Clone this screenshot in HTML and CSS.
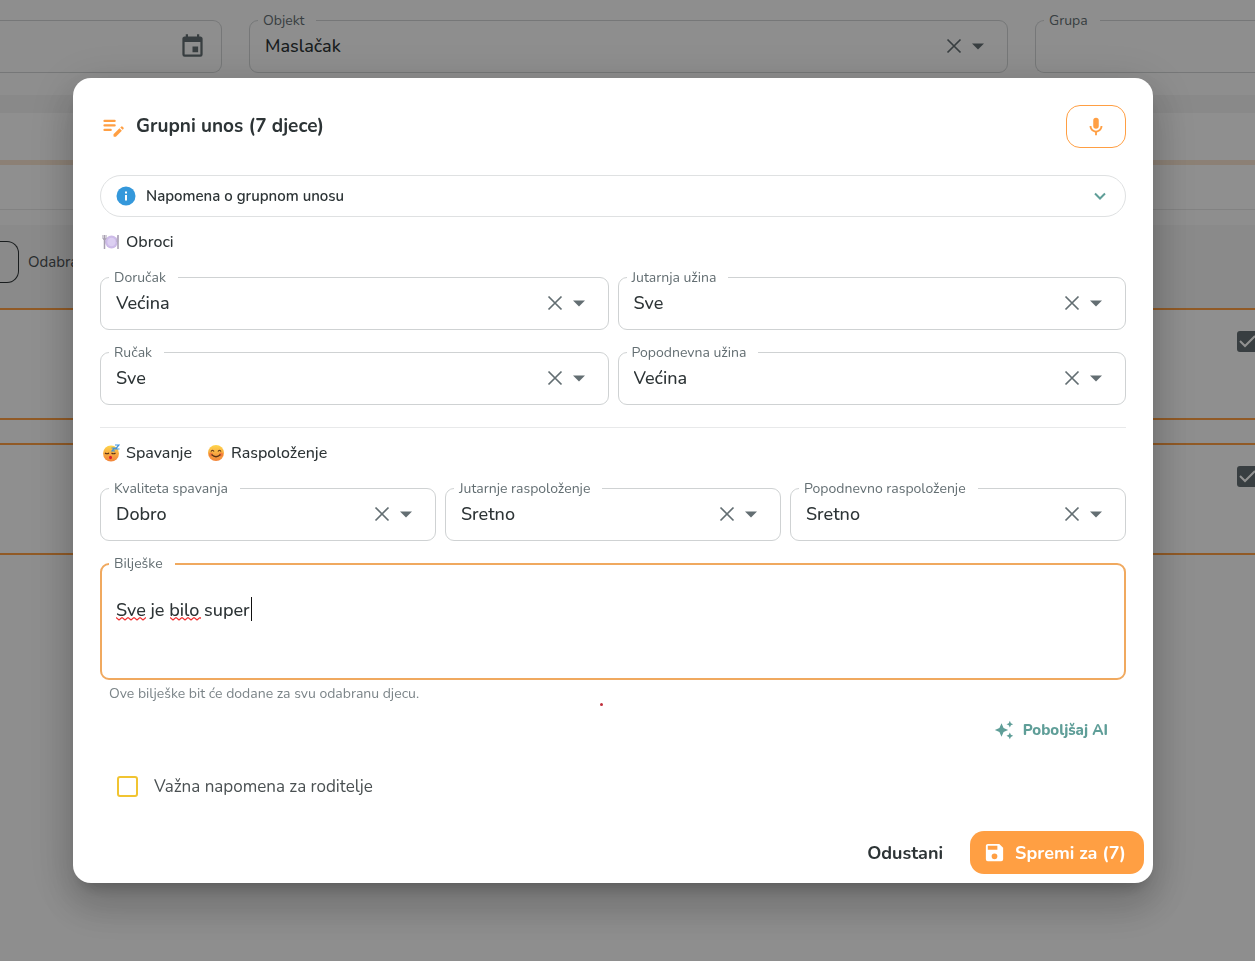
FILE: index.html
```html
<!DOCTYPE html>
<html lang="hr">
<head>
  <meta charset="UTF-8">
  <meta name="viewport" content="width=device-width, initial-scale=1">
  <title>Grupni unos</title>
  <link rel="stylesheet" href="styles.css">
</head>
<body>
  <svg class="sprite" aria-hidden="true">
    <symbol id="i-close" viewBox="0 0 24 24"><path d="M5.5 5.5l13 13M18.500 5.500l-13 13" fill="none" stroke="currentColor" stroke-width="1.700"/></symbol>
    <symbol id="i-down" viewBox="0 0 24 24"><path d="M6 9.500h12l-6 6z" fill="currentColor"/></symbol>
  </svg>

  <div class="page">
    <div class="filters">
      <div class="date-box">
        <button class="icon-btn" aria-label="Datum">
          <svg width="27" height="27" viewBox="0 0 24 24"><path fill="currentColor" d="M19,19H5V8H19M16,1V3H8V1H6V3H5C3.89,3 3,3.89 3,5V19A2,2 0 0,0 5,21H19A2,2 0 0,0 21,19V5C21,3.89 20.1,3 19,3H18V1M17,12H12V17H17V12Z"/></svg>
        </button>
      </div>
      <fieldset class="field">
        <legend><label for="objekt">Objekt</label></legend>
        <div class="field-row">
          <select id="objekt"><option>Maslačak</option></select>
          <button class="icon-btn" aria-label="Očisti"><svg><use href="#i-close"/></svg></button>
          <svg><use href="#i-down"/></svg>
        </div>
      </fieldset>
      <fieldset class="field field-cut">
        <legend><label for="grupa">Grupa</label></legend>
        <div class="field-row">
          <select id="grupa"><option></option></select>
        </div>
      </fieldset>
    </div>
    <div class="tabs"></div>
    <div class="subbar"></div>
    <div class="toolbar">
      <button class="select-btn" aria-label="Odaberi"></button>
      <span>Odabrano</span>
    </div>
    <div class="child-card"><input type="checkbox" aria-label="Dijete 1" checked></div>
    <div class="child-card"><input type="checkbox" aria-label="Dijete 2" checked></div>
  </div>

  <div class="overlay">
    <div class="dialog" role="dialog" aria-labelledby="dialogTitle">
      <div class="dialog-header">
        <svg class="note-icon" width="27" height="27" viewBox="0 0 24 24"><g fill="none" stroke="currentColor" stroke-width="2" stroke-linecap="round"><path d="M4 7h9M4 11h9M4 15h5.500"/></g><path fill="currentColor" d="M18.010 12.870l.71-.71a1 1 0 0 1 1.410 0l.71.71c.39.39.39 1.020 0 1.410l-.71.71zM17.300 13.580l-5.300 5.300v1.620q0 .5.500.5h1.620l5.300-5.300z"/></svg>
        <h2 id="dialogTitle">Grupni unos (7 djece)</h2>
        <button class="mic-btn" aria-label="Diktiraj">
          <svg width="22" height="22" viewBox="0 0 24 24"><path fill="currentColor" d="M12,2A3,3 0 0,1 15,5V11A3,3 0 0,1 12,14A3,3 0 0,1 9,11V5A3,3 0 0,1 12,2M19,11C19,14.53 16.39,17.44 13,17.93V21H11V17.93C7.61,17.44 5,14.53 5,11H7A5,5 0 0,0 12,16A5,5 0 0,0 17,11H19Z"/></svg>
        </button>
      </div>

      <button class="notice">
        <svg width="20" height="20" viewBox="0 0 20 20"><circle cx="10" cy="10" r="9.500" fill="#3498db"/><path d="M9 9h2v5.500H9zM9 5.500h2v2H9z" fill="#fff"/></svg>
        <span>Napomena o grupnom unosu</span>
        <svg class="chevron" width="20" height="20" viewBox="0 0 20 20"><path d="M5 7.500l5 5 5-5" fill="none" stroke="currentColor" stroke-width="2"/></svg>
      </button>

      <div class="section-title">
        <svg width="18" height="18" viewBox="0 0 18 18">
          <circle cx="9.500" cy="9" r="6.500" fill="#cdbbe8"/><circle cx="9.500" cy="9" r="4.200" fill="#dccff2"/>
          <path d="M1 2v4M2.500 2v4M4 2v4" stroke="#a79fb0"/><path d="M1 6h3M2.500 6v10M16 2v14" stroke="#a79fb0" stroke-width="1.500" fill="none"/>
          <path d="M16.500 2q-2 1-2 7h2z" fill="#b3a9bf"/>
        </svg>
        <span>Obroci</span>
      </div>

      <div class="grid two">
        <fieldset class="field">
          <legend><label for="dorucak">Doručak</label></legend>
          <div class="field-row">
            <select id="dorucak"><option>Većina</option></select>
            <button class="icon-btn" aria-label="Očisti"><svg><use href="#i-close"/></svg></button>
            <svg><use href="#i-down"/></svg>
          </div>
        </fieldset>
        <fieldset class="field">
          <legend><label for="jutarnjaUzina">Jutarnja užina</label></legend>
          <div class="field-row">
            <select id="jutarnjaUzina"><option>Sve</option></select>
            <button class="icon-btn" aria-label="Očisti"><svg><use href="#i-close"/></svg></button>
            <svg><use href="#i-down"/></svg>
          </div>
        </fieldset>
        <fieldset class="field">
          <legend><label for="rucak">Ručak</label></legend>
          <div class="field-row">
            <select id="rucak"><option>Sve</option></select>
            <button class="icon-btn" aria-label="Očisti"><svg><use href="#i-close"/></svg></button>
            <svg><use href="#i-down"/></svg>
          </div>
        </fieldset>
        <fieldset class="field">
          <legend><label for="popodnevnaUzina">Popodnevna užina</label></legend>
          <div class="field-row">
            <select id="popodnevnaUzina"><option>Većina</option></select>
            <button class="icon-btn" aria-label="Očisti"><svg><use href="#i-close"/></svg></button>
            <svg><use href="#i-down"/></svg>
          </div>
        </fieldset>
      </div>

      <hr>

      <div class="section-title">
        <svg width="18" height="18" viewBox="0 0 18 18">
          <defs><linearGradient id="face" x1="0" y1="0" x2="0" y2="1"><stop offset="0" stop-color="#ffd54a"/><stop offset="1" stop-color="#f2843a"/></linearGradient></defs>
          <circle cx="9" cy="9.500" r="8" fill="url(#face)"/>
          <path d="M3 9q2 1.500 4 0M9.500 9q2 1.500 4 0" fill="none" stroke="#5b3215" stroke-width="1.200"/>
          <ellipse cx="8.500" cy="13.500" rx="1.500" ry="1.800" fill="#d8202f"/>
          <path d="M13 1h4l-3.500 4h4M9.500 4h3l-2.500 3h3" fill="none" stroke="#3f92dc" stroke-width="1.200"/>
        </svg>
        <span>Spavanje</span>
        <svg class="second" width="18" height="18" viewBox="0 0 18 18">
          <circle cx="9" cy="9" r="8" fill="url(#face)"/>
          <circle cx="4" cy="10.500" r="2" fill="#f0603c" opacity=".6"/><circle cx="14" cy="10.500" r="2" fill="#f0603c" opacity=".6"/>
          <path d="M4 7.500q1.500-2.500 3 0M11 7.500q1.500-2.500 3 0M4.500 10.500q4.500 4.500 9 0" fill="none" stroke="#5b3215" stroke-width="1.200"/>
        </svg>
        <span>Raspoloženje</span>
      </div>

      <div class="grid three">
        <fieldset class="field">
          <legend><label for="spavanje">Kvaliteta spavanja</label></legend>
          <div class="field-row">
            <select id="spavanje"><option>Dobro</option></select>
            <button class="icon-btn" aria-label="Očisti"><svg><use href="#i-close"/></svg></button>
            <svg><use href="#i-down"/></svg>
          </div>
        </fieldset>
        <fieldset class="field">
          <legend><label for="jutro">Jutarnje raspoloženje</label></legend>
          <div class="field-row">
            <select id="jutro"><option>Sretno</option></select>
            <button class="icon-btn" aria-label="Očisti"><svg><use href="#i-close"/></svg></button>
            <svg><use href="#i-down"/></svg>
          </div>
        </fieldset>
        <fieldset class="field">
          <legend><label for="popodne">Popodnevno raspoloženje</label></legend>
          <div class="field-row">
            <select id="popodne"><option>Sretno</option></select>
            <button class="icon-btn" aria-label="Očisti"><svg><use href="#i-close"/></svg></button>
            <svg><use href="#i-down"/></svg>
          </div>
        </fieldset>
      </div>

      <fieldset class="field notes">
        <legend><label for="biljeske">Bilješke</label></legend>
        <div class="notes-body">
          <textarea id="biljeske" spellcheck="false">Sve je bilo super</textarea>
          <span class="squiggle first"></span>
          <span class="squiggle last"></span>
          <span class="caret"></span>
        </div>
      </fieldset>
      <div class="hint">Ove bilješke bit će dodane za svu odabranu djecu.<span class="dot"></span></div>

      <button class="ai-btn">
        <svg width="20" height="20" viewBox="0 0 24 24"><path fill="currentColor" d="M19,1L17.74,3.75L15,5L17.74,6.26L19,9L20.25,6.26L23,5L20.25,3.75M9,4L6.5,9.5L1,12L6.5,14.5L9,20L11.5,14.5L17,12L11.5,9.5M19,15L17.74,17.74L15,19L17.74,20.25L19,23L20.25,20.25L23,19L20.25,17.74"/></svg>
        <span>Poboljšaj AI</span>
      </button>

      <label class="important">
        <input type="checkbox">
        <span>Važna napomena za roditelje</span>
      </label>

      <div class="dialog-footer">
        <button class="cancel-btn">Odustani</button>
        <button class="save-btn">
          <svg width="23" height="23" viewBox="0 0 24 24"><path fill="currentColor" d="M15,9H5V5H15M12,19A3,3 0 0,1 9,16A3,3 0 0,1 12,13A3,3 0 0,1 15,16A3,3 0 0,1 12,19M17,3H5C3.89,3 3,3.9 3,5V19A2,2 0 0,0 5,21H19A2,2 0 0,0 21,19V7L17,3Z"/></svg>
          <span>Spremi za (7)</span>
        </button>
      </div>
    </div>
  </div>
</body>
</html>
```
FILE: styles.css
```css
* {
  box-sizing: border-box;
}
body {
  margin: 0;
  font-family: Nunito, 'Open Sans', sans-serif;
  font-size: 15px;
  color: #2d3436;
  background: #fafafa;
}
button, select, textarea {
  font-family: inherit;
  color: inherit;
}
button {
  padding: 0;
  border: none;
  background: none;
  cursor: pointer;
}
svg {
  display: block;
  flex: none;
}
.sprite {
  position: absolute;
  width: 0;
  height: 0;
}

/* page behind the dialog */
.page {
  height: 100vh;
  overflow: hidden;
}
.filters {
  display: grid;
  grid-template-columns: 222px 1fr 220px;
  gap: 27px;
  padding: 12px 0 22px;
}
.date-box {
  display: flex;
  align-items: center;
  justify-content: flex-end;
  margin-top: 8px;
  padding-right: 15px;
  border: 1px solid #cfd2d3;
  border-left: none;
  border-radius: 0 9px 9px 0;
  color: #636e72;
}
.tabs {
  height: 70px;
  border-top: 18px solid #f1f1f1;
  border-bottom: 5px solid #f6e2ce;
  background: #fcfcfc;
}
.subbar {
  height: 45px;
  border-bottom: 1px solid #e4e4e4;
  background: #fcfcfc;
}
.toolbar {
  display: flex;
  align-items: center;
  gap: 9px;
  height: 83px;
  margin: 15px 0 0;
  padding-bottom: 10px;
  background: #f2f2f2;
  color: #4a5052;
}
.select-btn {
  width: 19px;
  height: 42px;
  border: 1px solid #2d3436;
  border-left: none;
  border-radius: 0 12px 12px 0;
}
.child-card {
  display: flex;
  justify-content: flex-end;
  height: 112px;
  margin-bottom: 23px;
  padding-top: 21px;
  border: solid #ff9f43;
  border-width: 2px 0;
  background: #fcfcfc;
  overflow: hidden;
}
.child-card input {
  appearance: none;
  flex: none;
  width: 21px;
  height: 21px;
  margin: 0 -3px 0 0;
  border-radius: 3px;
  background: #636e72 url("data:image/svg+xml,%3Csvg xmlns='http://www.w3.org/2000/svg' viewBox='0 0 21 21'%3E%3Cpath d='M3 10l5 5L18 5' fill='none' stroke='white' stroke-width='2'/%3E%3C/svg%3E");
}

/* dialog */
.overlay {
  position: fixed;
  inset: 0;
  display: flex;
  align-items: center;
  justify-content: center;
  padding-right: 29px;
  background: rgba(0, 0, 0, 0.43);
}
.dialog {
  width: 1080px;
  max-width: 95%;
  padding: 27px 27px 9px;
  border-radius: 18px;
  background: #fff;
  box-shadow: 0 11px 15px -7px rgba(0, 0, 0, 0.2), 0 24px 38px 3px rgba(0, 0, 0, 0.14), 0 9px 46px 8px rgba(0, 0, 0, 0.12);
}
.dialog-header {
  display: flex;
  align-items: center;
  gap: 9px;
  margin-bottom: 27px;
}
.dialog-header h2 {
  flex: 1;
  margin: 0;
  padding-bottom: 2px;
  font-size: 19px;
  font-weight: 700;
  line-height: 28px;
}
.note-icon {
  color: #ff9f43;
}
.mic-btn {
  display: flex;
  align-items: center;
  justify-content: center;
  width: 60px;
  height: 43px;
  border: 1px solid #ff9f43;
  border-radius: 14px;
  color: #ff9f43;
}
.notice {
  display: flex;
  align-items: center;
  gap: 10px;
  width: 100%;
  height: 42px;
  padding: 0 15px;
  border: 1px solid #dfe1e2;
  border-radius: 21px;
  font-size: 15px;
  font-weight: 600;
}
.notice .chevron {
  margin-left: auto;
  color: #5f9e98;
}
.section-title {
  display: flex;
  align-items: center;
  gap: 6px;
  margin: 15px 0 17px;
  padding-left: 2px;
  font-size: 16px;
  font-weight: 500;
  line-height: 20px;
}
.section-title .second {
  margin-left: 9px;
}
.grid {
  display: grid;
  gap: 14px 9px;
}
.grid.two {
  grid-template-columns: repeat(2, 1fr);
}
.grid.three {
  grid-template-columns: repeat(3, 1fr);
}

.field {
  min-width: 0;
  margin: 0;
  padding: 0 0 10px;
  border: 1px solid #cfd2d3;
  border-radius: 9px;
}
.field.field-cut {
  border-right: none;
  border-radius: 9px 0 0 9px;
}
.field legend {
  margin-left: 8px;
  padding: 0 12px 0 5px;
  font-size: 14px;
  line-height: 17px;
  color: #636e72;
}
.field legend label {
  display: block;
}
.field-row {
  display: flex;
  align-items: center;
  height: 33px;
  padding: 0 17px 0 15px;
  color: #636e72;
}
.field-row svg {
  width: 24px;
  height: 24px;
}
.field select {
  appearance: none;
  flex: 1;
  min-width: 0;
  height: 28px;
  padding: 0;
  border: none;
  outline: none;
  background: none;
  font-size: 18px;
  font-weight: 500;
  color: #2d3436;
}
hr {
  margin: 22px 0 15px;
  border: none;
  border-top: 1px solid #e8e9ea;
}

.field.notes {
  margin-top: 14px;
  padding: 0;
  border: 2px solid #f0a95f;
}
.notes legend {
  margin-left: 7px;
}
.notes-body {
  position: relative;
  height: 106px;
}
.notes textarea {
  display: block;
  width: 100%;
  height: 100%;
  padding: 24px 14px 0;
  border: none;
  outline: none;
  resize: none;
  background: none;
  font-size: 18px;
  font-weight: 500;
  line-height: 28px;
}
.squiggle {
  position: absolute;
  top: 45px;
  height: 4px;
  background: url("data:image/svg+xml,%3Csvg xmlns='http://www.w3.org/2000/svg' width='6' height='4'%3E%3Cpath d='M0 .5l3 2.500 3-2.500' fill='none' stroke='%23f03030' stroke-width='1.200'/%3E%3C/svg%3E") repeat-x;
}
.squiggle.first {
  left: 14px;
  width: 30px;
}
.squiggle.last {
  left: 68px;
  width: 31px;
}
.caret {
  position: absolute;
  top: 25px;
  left: 149px;
  width: 1px;
  height: 24px;
  background: #111;
}
.hint {
  position: relative;
  margin-top: 4px;
  padding-left: 9px;
  font-size: 14px;
  line-height: 20px;
  color: #7b8488;
}
.dot {
  position: absolute;
  top: 19px;
  left: 500px;
  width: 3px;
  height: 3px;
  border-radius: 50%;
  background: #c0303c;
}
.ai-btn {
  display: flex;
  align-items: center;
  gap: 9px;
  margin: 8px 18px 0 auto;
  font-size: 15px;
  font-weight: 800;
  line-height: 36px;
  color: #5f9e98;
}
.important {
  display: flex;
  align-items: center;
  gap: 16px;
  width: fit-content;
  margin: 27px 0 33px;
  padding-left: 17px;
  font-size: 17px;
  line-height: 23px;
  color: #4a5052;
}
.important input {
  appearance: none;
  width: 21px;
  height: 21px;
  margin: 0;
  border: 2px solid #f1c431;
  border-radius: 3px;
}
.dialog-footer {
  display: flex;
  justify-content: flex-end;
  gap: 9px;
  margin-right: -18px;
}
.cancel-btn, .save-btn {
  display: flex;
  align-items: center;
  gap: 9px;
  height: 43px;
  padding: 0 18px;
  border-radius: 14px;
  font-size: 18px;
  font-weight: 700;
}
.save-btn {
  padding-left: 13px;
  background: #ff9f43;
  color: #fff;
}
```
